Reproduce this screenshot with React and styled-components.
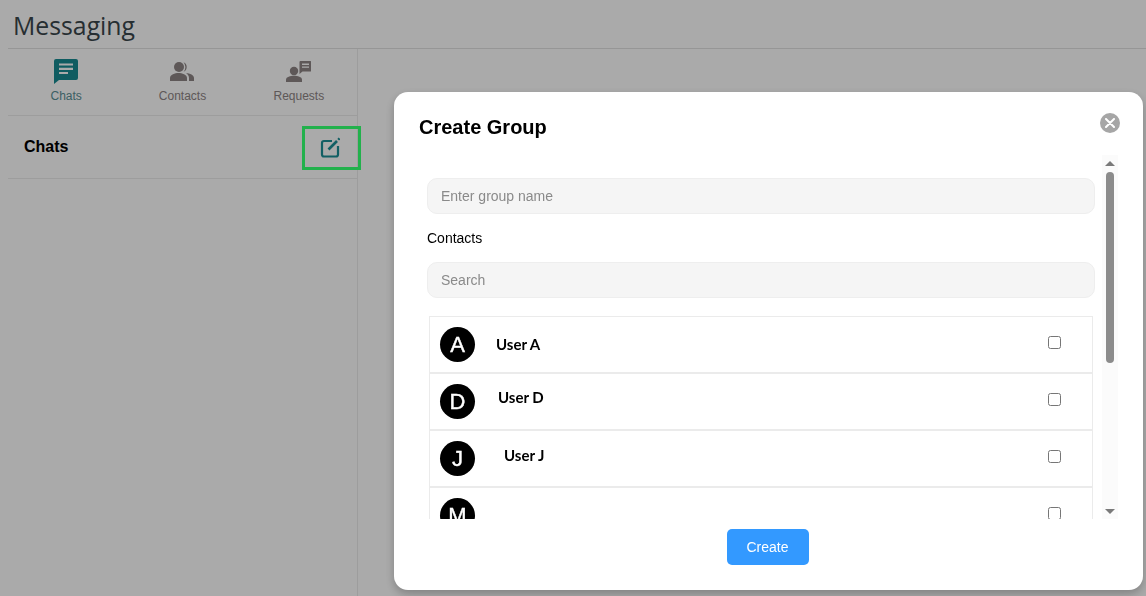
import React from 'react';
import styled, { createGlobalStyle } from 'styled-components';

const contacts = [
  { letter: 'A', name: 'User A', indent: 21, lift: 1 },
  { letter: 'D', name: 'User D', indent: 23, lift: 10 },
  { letter: 'J', name: 'User J', indent: 29, lift: 8 },
  { letter: 'M', name: '', indent: 21, lift: 0 },
];

const ChatIcon = () => (
  <svg width="24" height="25" viewBox="0 0 24 25" fill="#178b92">
    <path d="M2 0h20a2 2 0 0 1 2 2v17a2 2 0 0 1-2 2H5l-5 4V2a2 2 0 0 1 2-2z" />
    <path fill="#fff" d="M5 4.500h14v2H5zM5 8.700h14v2.200H5zM5 13h9v2H5z" />
  </svg>
);

const ContactsIcon = () => (
  <svg width="24" height="19" viewBox="0 0 24 19" fill="#8d8484">
    <circle cx="9" cy="5" r="5" />
    <path d="M0 19v-3c0-3.400 5-5 8.500-5s8.500 1.600 8.500 5v3z" />
    <path d="M13.500 .2a5.200 5.200 0 0 1 0 9.600 7 7 0 0 0 0-9.600z" />
    <path d="M16 11c4 .4 8 2.200 8 5v3h-5v-3c0-1.900-1.200-3.800-3-5z" />
  </svg>
);

const RequestsIcon = () => (
  <svg width="25" height="21" viewBox="0 0 25 21" fill="#8d8484">
    <circle cx="8" cy="10" r="4.200" />
    <path d="M0 21v-2.500c0-2.600 4.500-3.800 8-3.800s8 1.200 8 3.800V21z" />
    <path d="M14.500 0h10a.5.5 0 0 1 .5.500V10a.5.500 0 0 1-.5.500H16.500L13.500 13V1a1 1 0 0 1 1-1z" />
    <path fill="#fff" d="M16 2.600h7v1.300h-7zM16 5.400h7v1.300h-7z" />
  </svg>
);

const EditIcon = () => (
  <svg width="20" height="21" viewBox="0 0 20 21" fill="none" stroke="#1b8f96" strokeWidth="2.200">
    <path d="M12 4H4a2 2 0 0 0-2 2v11.500a2 2 0 0 0 2 2h12a2 2 0 0 0 2-2V9" />
    <path strokeWidth="2.600" d="M8.500 12.500 17 4" />
    <path strokeWidth="2.200" d="M18.200 2.700 19.400 1.300" />
  </svg>
);

const App = () => {
  return (
    <Page>
      <GlobalStyle />
      <PageHeader>
        <h1>Messaging</h1>
      </PageHeader>
      <Sidebar>
        <Tabs>
          <Tab $active>
            <TabIcon><ChatIcon /></TabIcon>
            Chats
          </Tab>
          <Tab>
            <TabIcon><ContactsIcon /></TabIcon>
            Contacts
          </Tab>
          <Tab>
            <TabIcon><RequestsIcon /></TabIcon>
            Requests
          </Tab>
        </Tabs>
        <ChatsRow>
          <h2>Chats</h2>
          <EditButton><EditIcon /></EditButton>
        </ChatsRow>
      </Sidebar>

      <Backdrop />
      <Highlight />

      <Modal>
        <ModalHeader>
          <h2>Create Group</h2>
          <CloseButton aria-label="Close">
            <svg width="10" height="10" viewBox="0 0 10 10" stroke="#fff" strokeWidth="2" strokeLinecap="round">
              <path d="M1 1l8 8M9 1l-8 8" />
            </svg>
          </CloseButton>
        </ModalHeader>
        <ModalMiddle>
          <ModalBody>
            <TextInput placeholder="Enter group name" />
            <SectionLabel>Contacts</SectionLabel>
            <TextInput placeholder="Search" />
            <ContactList>
              {contacts.map((c) => (
                <ContactRow key={c.letter}>
                  <Avatar>{c.letter}</Avatar>
                  <ContactName $indent={c.indent} $lift={c.lift}>{c.name}</ContactName>
                  <Check type="checkbox" />
                </ContactRow>
              ))}
            </ContactList>
          </ModalBody>
          <ScrollRail>
            <RailArrow />
            <RailThumb />
            <RailArrow $down />
          </ScrollRail>
        </ModalMiddle>
        <ModalFooter>
          <CreateButton>Create</CreateButton>
        </ModalFooter>
      </Modal>
    </Page>
  );
};

const GlobalStyle = createGlobalStyle`
  html, body {
    margin: 0;
    height: 100%;
    overflow: hidden;
    background: #fff;
    font-family: "Liberation Sans", Arial, sans-serif;
  }
  * { box-sizing: border-box; }
`;

const Page = styled.div`
  height: 100vh;
  padding: 0 0 0 8px;
  display: flex;
  flex-direction: column;
`;

const PageHeader = styled.header`
  height: 49px;
  flex: none;
  padding-left: 5px;
  border-bottom: 1px solid #e2e2e2;
  h1 {
    margin: 0;
    font: 400 24.8px/51px "Open Sans", sans-serif;
    color: #3a464b;
  }
`;

const Sidebar = styled.aside`
  width: 350px;
  flex: 1;
  border-right: 1px solid #ececec;
`;

const Tabs = styled.nav`
  height: 67px;
  display: grid;
  grid-template-columns: repeat(3, 1fr);
  border-bottom: 1px solid #ececec;
`;

const Tab = styled.div`
  display: flex;
  flex-direction: column;
  align-items: center;
  font-size: 12px;
  line-height: 14px;
  color: ${(p) => (p.$active ? '#5a8f96' : '#8d8484')};
`;

const TabIcon = styled.div`
  height: 44px;
  margin-bottom: -4px;
  display: flex;
  align-items: center;
`;

const ChatsRow = styled.div`
  height: 63px;
  display: flex;
  align-items: center;
  justify-content: space-between;
  padding: 0 17px 0 16px;
  border-bottom: 1px solid #ececec;
  h2 {
    margin: 0;
    font-size: 16px;
    font-weight: 700;
    color: #000;
  }
`;

const EditButton = styled.div`
  display: flex;
  margin-top: 1px;
`;

const Backdrop = styled.div`
  position: fixed;
  inset: 0;
  background: rgba(0, 0, 0, 0.335);
`;

const Highlight = styled.div`
  position: fixed;
  left: 302px;
  top: 126px;
  width: 59px;
  height: 44px;
  border: 3px solid #22b14c;
`;

const Modal = styled.div`
  position: fixed;
  left: 394px;
  top: 92px;
  width: 749px;
  height: 498px;
  display: flex;
  flex-direction: column;
  background: #fff;
  border-radius: 14px;
  box-shadow: 0 4px 10px rgba(0, 0, 0, 0.24);
`;

const ModalHeader = styled.div`
  height: 63px;
  flex: none;
  padding: 24px 25px 0;
  h2 {
    margin: 0;
    font-size: 20px;
    line-height: 23px;
    font-weight: 700;
    color: #000;
  }
`;

const CloseButton = styled.button`
  position: absolute;
  top: 21px;
  right: 23px;
  width: 20px;
  height: 20px;
  padding: 0;
  border: 0;
  border-radius: 50%;
  background: #a6a6a6;
  display: flex;
  align-items: center;
  justify-content: center;
`;

const ModalMiddle = styled.div`
  flex: 1;
  min-height: 0;
  margin-left: 25px;
  width: 699px;
  display: flex;
`;

const ModalBody = styled.div`
  flex: 1;
  min-width: 0;
  padding: 23px 7px 0 8px;
  overflow: hidden;
`;

const ScrollRail = styled.div`
  width: 16px;
  flex: none;
  display: flex;
  flex-direction: column;
  align-items: center;
  background: #fbfbfb;
`;

const RailArrow = styled.div`
  width: 16px;
  height: 16px;
  flex: none;
  margin-top: ${(p) => (p.$down ? 'auto' : '0')};
  display: flex;
  align-items: center;
  justify-content: center;
  &::before {
    content: "";
    border-left: 5px solid transparent;
    border-right: 5px solid transparent;
    border-bottom: ${(p) => (p.$down ? '0' : '5px solid #7a7a7a')};
    border-top: ${(p) => (p.$down ? '5px solid #7a7a7a' : '0')};
  }
`;

const RailThumb = styled.div`
  width: 8px;
  height: 191px;
  margin-top: 1px;
  border-radius: 4px;
  background: #8c8c8c;
`;

const TextInput = styled.input`
  display: block;
  width: 100%;
  height: 36px;
  padding: 0 13px;
  background: #f5f5f5;
  border: 1px solid #eeeeee;
  border-radius: 10px;
  font: 14px "Liberation Sans", Arial, sans-serif;
  outline: none;
  &::placeholder { color: #8a8a8a; opacity: 1; }
`;

const SectionLabel = styled.div`
  height: 48px;
  display: flex;
  align-items: center;
  font-size: 14px;
  color: #000;
`;

const ContactList = styled.div`
  margin: 18px 2px 0;
`;

const ContactRow = styled.div`
  height: 57px;
  display: flex;
  align-items: center;
  padding-left: 10px;
  border: 1px solid #ebebeb;
`;

const Avatar = styled.div`
  width: 35px;
  height: 35px;
  flex: none;
  border-radius: 50%;
  background: #000;
  color: #fff;
  font-size: 22px;
  -webkit-text-stroke: 0.4px #fff;
  display: flex;
  align-items: center;
  justify-content: center;
`;

const ContactName = styled.span`
  margin-left: ${(p) => p.$indent}px;
  margin-bottom: ${(p) => p.$lift}px;
  font: 700 15px "Lato", sans-serif;
  color: #000;
`;

const Check = styled.input`
  width: 13px;
  height: 13px;
  margin: 0 31px 4px auto;
`;

const ModalFooter = styled.div`
  height: 71px;
  flex: none;
  padding: 10px 2px 0 0;
  display: flex;
  justify-content: center;
  align-items: flex-start;
`;

const CreateButton = styled.button`
  width: 82px;
  height: 36px;
  border: 0;
  border-radius: 5px;
  background: #3399ff;
  color: #fff;
  font: 14px "Liberation Sans", Arial, sans-serif;
`;

export default App;
